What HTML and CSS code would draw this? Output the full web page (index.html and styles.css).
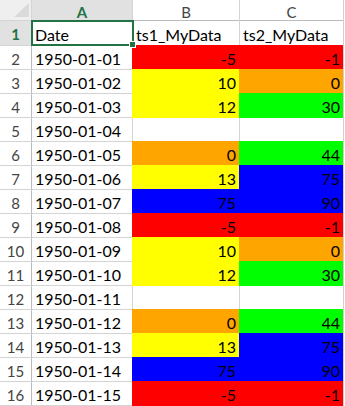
FILE: index.html
```html
<!DOCTYPE html>
<html>
<head>
<meta charset="utf-8">
<link rel="stylesheet" href="styles.css">
</head>
<body>
<div class="sheet">
  <div class="grid">
    <div class="corner"><svg width="15" height="14" viewBox="0 0 15 14"><polygon points="15,0 15,14 0,14" fill="#dadada"/></svg></div>
    <div class="ch sel">A</div>
    <div class="ch">B</div>
    <div class="ch">C</div>

    <div class="rh sel">1</div><div class="txt">Date</div><div class="txt">ts1_MyData</div><div class="txt">ts2_MyData</div>
    <div class="rh">2</div><div class="txt">1950-01-01</div><div class="num red">-5</div><div class="num red">-1</div>
    <div class="rh">3</div><div class="txt">1950-01-02</div><div class="num yellow">10</div><div class="num orange">0</div>
    <div class="rh">4</div><div class="txt">1950-01-03</div><div class="num yellow">12</div><div class="num green">30</div>
    <div class="rh">5</div><div class="txt">1950-01-04</div><div class="num"></div><div class="num"></div>
    <div class="rh">6</div><div class="txt">1950-01-05</div><div class="num orange">0</div><div class="num green">44</div>
    <div class="rh">7</div><div class="txt">1950-01-06</div><div class="num yellow">13</div><div class="num blue">75</div>
    <div class="rh">8</div><div class="txt">1950-01-07</div><div class="num blue">75</div><div class="num blue">90</div>
    <div class="rh">9</div><div class="txt">1950-01-08</div><div class="num red">-5</div><div class="num red">-1</div>
    <div class="rh">10</div><div class="txt">1950-01-09</div><div class="num yellow">10</div><div class="num orange">0</div>
    <div class="rh">11</div><div class="txt">1950-01-10</div><div class="num yellow">12</div><div class="num green">30</div>
    <div class="rh">12</div><div class="txt">1950-01-11</div><div class="num"></div><div class="num"></div>
    <div class="rh">13</div><div class="txt">1950-01-12</div><div class="num orange">0</div><div class="num green">44</div>
    <div class="rh">14</div><div class="txt">1950-01-13</div><div class="num yellow">13</div><div class="num blue">75</div>
    <div class="rh">15</div><div class="txt">1950-01-14</div><div class="num blue">75</div><div class="num blue">90</div>
    <div class="rh">16</div><div class="txt">1950-01-15</div><div class="num red">-5</div><div class="num red">-1</div>
  </div>
  <div class="selbox"><span class="handle"></span></div>
</div>
</body>
</html>
```
FILE: styles.css
```css
* { box-sizing: border-box; }
html, body { margin: 0; padding: 0; background: #fff; overflow: hidden; }
body { font-family: Lato, "Liberation Sans", sans-serif; }

.sheet {
  position: relative;
  width: 344px;
  border-right: 1px solid #d0d0d0;
  overflow: hidden;
}

.grid {
  display: grid;
  grid-template-columns: 31px 100px 106px 103px;
  grid-template-rows: 20px 24px repeat(15, 23px);
  gap: 1px;
  background: #d4d4d4;
  padding-bottom: 1px;
}

.grid > div {
  background: #fff;
  display: flex;
  align-items: center;
  font-size: 16px;
  color: #000;
  padding-top: 2px;
  white-space: nowrap;
  overflow: hidden;
}

.grid > .corner {
  background: #efefef;
  justify-content: flex-end;
  align-items: flex-end;
  padding: 0 2px 3px 0;
}
.corner svg { display: block; }

.grid > .ch {
  justify-content: center;
  font-size: 15px;
  color: #444;
  padding-top: 3px;
  box-shadow: 0 1px 0 #bcbcbc;
}

.grid > .rh {
  justify-content: center;
  font-size: 15px;
  color: #444;
  box-shadow: 1px 0 0 #bcbcbc;
}

.grid > .sel {
  background: #e1e1e1;
  color: #217346;
  font-weight: bold;
}

.grid > .txt { padding-left: 3px; }
.grid > .num { justify-content: flex-end; padding-right: 3px; }

.grid > .red { background: #ff0000; box-shadow: 0 0 0 1px #ff0000; }
.grid > .yellow { background: #ffff00; box-shadow: 0 0 0 1px #ffff00; }
.grid > .orange { background: #ffa500; box-shadow: 0 0 0 1px #ffa500; }
.grid > .green { background: #00ff00; box-shadow: 0 0 0 1px #00ff00; }
.grid > .blue { background: #0000ff; box-shadow: 0 0 0 1px #0000ff; }

.selbox {
  position: absolute;
  left: 31px;
  top: 20px;
  width: 103px;
  height: 26px;
  border: 2px solid #217346;
}
.handle {
  position: absolute;
  right: -4px;
  bottom: -4px;
  width: 7px;
  height: 7px;
  background: #217346;
  border: 1px solid #fff;
}
```
